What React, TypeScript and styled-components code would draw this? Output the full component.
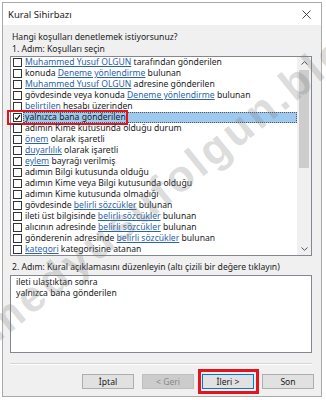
import React from "react";
import styled, { createGlobalStyle } from "styled-components";

const GlobalStyle = createGlobalStyle`
	html, body {
		margin: 0;
		padding: 0;
		background: #ffffff;
	}
	body {
		font-family: "Noto Sans", "Open Sans", sans-serif;
		font-size: 8.6px;
		color: #1a1a1a;
	}
`;

const Page = styled.div`
	position: relative;
	width: 326px;
	height: 400px;
	overflow: hidden;
	padding: 2px;
	box-sizing: border-box;
`;

const Window = styled.div`
	width: 320px;
	height: 395px;
	border: 1px solid #a9a9a9;
	box-sizing: border-box;
	background: #f0f0f0;
	display: flex;
	flex-direction: column;
`;

const TitleBar = styled.div`
	height: 22px;
	background: #ffffff;
	display: flex;
	align-items: center;
	justify-content: space-between;
	padding: 0 10px 0 5px;
	font-size: 9.5px;
	color: #222;
`;

const Body = styled.div`
	padding: 6px 9px 0 7px;
	display: flex;
	flex-direction: column;
`;

const Line = styled.div<{ $gap?: number }>`
	line-height: 12px;
	height: 12px;
	padding-left: 2px;
	margin-top: ${(p) => p.$gap ?? 0}px;
	white-space: nowrap;
`;

const ListBox = styled.div`
	margin-top: 1px;
	height: 200px;
	border: 1px solid #828790;
	box-sizing: border-box;
	background: #ffffff;
	display: flex;
`;

const Rows = styled.div`
	flex: 1;
	display: flex;
	flex-direction: column;
`;

const Row = styled.div<{ $selected?: boolean }>`
	position: relative;
	height: 11px;
	display: flex;
	align-items: center;
	padding-left: 2px;
	white-space: nowrap;

	${(p) =>
		p.$selected &&
		`
		&::after {
			content: "";
			position: absolute;
			left: -4px;
			top: -2px;
			width: 121px;
			height: 15px;
			border: 2px solid #e3141b;
			box-sizing: border-box;
		}
	`}
`;

const Check = styled.span`
	width: 9px;
	height: 9px;
	box-sizing: border-box;
	border: 1px solid #333;
	background: #fff;
	flex: none;
	display: flex;
	align-items: center;
	justify-content: center;
	margin-right: 1px;
`;

const Label = styled.span<{ $selected?: boolean }>`
	flex: 1;
	height: 11px;
	line-height: 11px;
	padding-left: 2px;
	background: ${(p) => (p.$selected ? "#9ec9ee" : "transparent")};
	outline: ${(p) => (p.$selected ? "1px dotted #555" : "none")};
	outline-offset: -1px;
`;

const Link = styled.span`
	color: #2c63a6;
	text-decoration: underline;
`;

const ScrollBar = styled.div`
	width: 14px;
	background: #f0f0f0;
	display: flex;
	flex-direction: column;
	align-items: center;
`;

const Arrow = styled.div`
	height: 12px;
	width: 14px;
	display: flex;
	align-items: center;
	justify-content: center;
`;

const Track = styled.div`
	flex: 1;
	width: 100%;
`;

const Thumb = styled.div`
	margin: 1px 2px 0;
	height: 98px;
	background: #cdcdcd;
`;

const TextBox = styled.div`
	margin-top: 2px;
	height: 78px;
	border: 1px solid #828790;
	box-sizing: border-box;
	background: #ffffff;
	padding: 1px 5px;
	line-height: 11px;
`;

const Separator = styled.div`
	margin-top: 10px;
	height: 1px;
	background: #d6d6d6;
	border-bottom: 1px solid #ffffff;
`;

const Buttons = styled.div`
	margin-top: 9px;
	display: flex;
	justify-content: flex-end;
	gap: 8px;
	margin-right: -2px;
`;

const Button = styled.div<{ $disabled?: boolean; $default?: boolean; $marked?: boolean }>`
	position: relative;
	width: 52px;
	height: 15px;
	box-sizing: border-box;
	border: 1px solid ${(p) => (p.$default ? "#0078d7" : p.$disabled ? "#bfbfbf" : "#adadad")};
	background: ${(p) => (p.$disabled ? "#cccccc" : "#e1e1e1")};
	color: ${(p) => (p.$disabled ? "#8a8a8a" : "#1a1a1a")};
	display: flex;
	align-items: center;
	justify-content: center;

	${(p) =>
		p.$marked &&
		`
		&::after {
			content: "";
			position: absolute;
			left: -5px;
			top: -6px;
			right: -6px;
			bottom: -6px;
			border: 3px solid #e3141b;
		}
	`}
`;

const Watermark = styled.div`
	position: absolute;
	left: -131px;
	top: 412px;
	height: 44px;
	line-height: 44px;
	font-family: "Liberation Sans", Arial, sans-serif;
	font-weight: bold;
	font-size: 44px;
	letter-spacing: 3px;
	color: rgba(120, 120, 120, 0.26);
	transform: rotate(-39deg);
	transform-origin: 0 100%;
	white-space: nowrap;
	pointer-events: none;
`;

type Item = { parts: (string | { link: string })[]; checked?: boolean };

const items: Item[] = [
	{ parts: [{ link: "Muhammed Yusuf OLGUN" }, " tarafından gönderilen"] },
	{ parts: ["konuda ", { link: "Deneme yönlendirme" }, " bulunan"] },
	{ parts: [{ link: "Muhammed Yusuf OLGUN" }, " adresine gönderilen"] },
	{ parts: ["gövdesinde veya konuda ", { link: "Deneme yönlendirme" }, " bulunan"] },
	{ parts: [{ link: "belirtilen" }, " hesabı üzerinden"] },
	{ parts: ["yalnızca bana gönderilen"], checked: true },
	{ parts: ["adımın Kime kutusunda olduğu durum"] },
	{ parts: [{ link: "önem" }, " olarak işaretli"] },
	{ parts: [{ link: "duyarlılık" }, " olarak işaretli"] },
	{ parts: [{ link: "eylem" }, " bayrağı verilmiş"] },
	{ parts: ["adımın Bilgi kutusunda olduğu"] },
	{ parts: ["adımın Kime veya Bilgi kutusunda olduğu"] },
	{ parts: ["adımın Kime kutusunda olmadığı"] },
	{ parts: ["gövdesinde ", { link: "belirli sözcükler" }, " bulunan"] },
	{ parts: ["ileti üst bilgisinde ", { link: "belirli sözcükler" }, " bulunan"] },
	{ parts: ["alıcının adresinde ", { link: "belirli sözcükler" }, " bulunan"] },
	{ parts: ["gönderenin adresinde ", { link: "belirli sözcükler" }, " bulunan"] },
	{ parts: [{ link: "kategori" }, " kategorisine atanan"] },
];

const App = () => {
	return (
		<Page>
			<GlobalStyle />
			<Window>
				<TitleBar>
					<span>Kural Sihirbazı</span>
					<svg width="9" height="9" viewBox="0 0 9 9">
						<path d="M0.5 0.5 L8.5 8.5 M8.5 0.5 L0.5 8.5" stroke="#333" strokeWidth="0.9" />
					</svg>
				</TitleBar>
				<Body>
					<Line>Hangi koşulları denetlemek istiyorsunuz?</Line>
					<Line>1. Adım: Koşulları seçin</Line>
					<ListBox>
						<Rows>
							{items.map((item, i) => (
								<Row key={i} $selected={item.checked}>
									<Check>
										{item.checked && (
											<svg width="7" height="7" viewBox="0 0 7 7">
												<path d="M1 3.6 L2.8 5.4 L6 1.2" stroke="#111" strokeWidth="1.2" fill="none" />
											</svg>
										)}
									</Check>
									<Label $selected={item.checked}>
										{item.parts.map((p, j) =>
											typeof p === "string" ? <span key={j}>{p}</span> : <Link key={j}>{p.link}</Link>
										)}
									</Label>
								</Row>
							))}
						</Rows>
						<ScrollBar>
							<Arrow>
								<svg width="7" height="4" viewBox="0 0 7 4">
									<path d="M0.5 3.5 L3.5 0.7 L6.5 3.5" stroke="#555" strokeWidth="1" fill="none" />
								</svg>
							</Arrow>
							<Track>
								<Thumb />
							</Track>
							<Arrow>
								<svg width="7" height="4" viewBox="0 0 7 4">
									<path d="M0.5 0.5 L3.5 3.3 L6.5 0.5" stroke="#555" strokeWidth="1" fill="none" />
								</svg>
							</Arrow>
						</ScrollBar>
					</ListBox>
					<Line $gap={5}>
						2. Adım: Kural açıklamasını düzenleyin (altı çizili bir değere tıklayın)
					</Line>
					<TextBox>
						<div>ileti ulaştıktan sonra</div>
						<div>yalnızca bana gönderilen</div>
					</TextBox>
					<Separator />
					<Buttons>
						<Button>İptal</Button>
						<Button $disabled>&lt; Geri</Button>
						<Button $default $marked>İleri &gt;</Button>
						<Button>Son</Button>
					</Buttons>
				</Body>
			</Window>
			<Watermark>muhammedyusufolgun.blogspot.com</Watermark>
		</Page>
	);
};

export default App;
